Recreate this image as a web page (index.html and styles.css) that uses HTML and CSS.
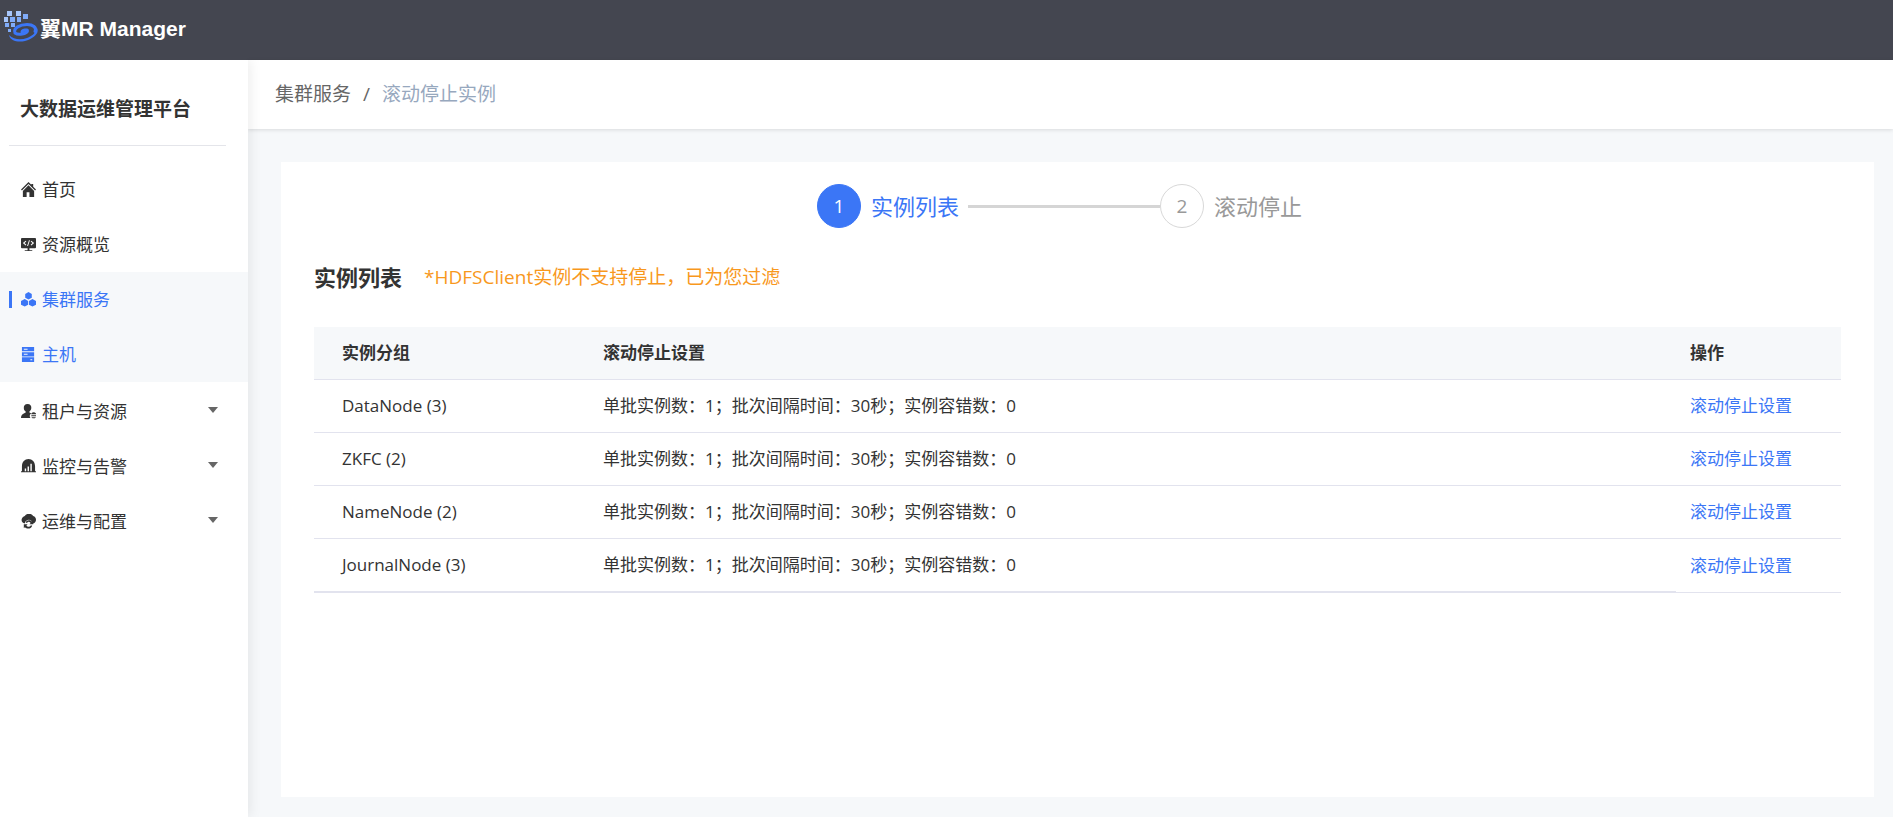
FILE: index.html
```html
<!DOCTYPE html>
<html lang="zh-CN">
<head>
<meta charset="utf-8">
<title>翼MR Manager</title>
<link rel="stylesheet" href="styles.css">
</head>
<body>
<header class="topbar">
  <svg class="logo" viewBox="0 0 36 32" width="36" height="32" aria-hidden="true">
    <g fill="#a6c5fb"><rect x="3" y="1" width="5" height="5"/><rect x="12" y="1" width="5" height="5"/><rect x="0" y="7" width="4" height="5"/></g>
    <g fill="#80abf8"><rect x="6" y="7" width="5" height="5"/><rect x="13" y="7" width="4" height="5"/><rect x="19" y="4" width="5" height="5"/><rect x="1" y="13" width="4" height="4"/><rect x="7" y="13" width="4" height="4"/><rect x="4" y="19" width="3" height="3"/></g>
    <path fill="none" stroke="#3b76f6" stroke-width="3" stroke-linecap="round" d="M18 22c0-2 6-3 5.500-1-1 3-9 4.500-12.500 2-2-5 5-8.500 12-8.500 6 0 10 3 8 7"/>
    <path fill="#3b76f6" d="M5 25c5 5 12 5 18 3 5-2 9-5 10-10 3 5-4 11-12 13-7 1.500-15 0-16-6z"/>
  </svg>
  <span class="brand">翼MR Manager</span>
</header>
<div class="layout">
  <aside class="sidebar">
    <h1 class="platform">大数据运维管理平台</h1>
    <nav class="menu">
      <a class="item" href="#"><svg class="icon" viewBox="0 0 16 16"><path d="M8 0 0 8l1 1 7-7 7 7 1-1-3-3V2h-2v1z"/><path d="M8 3.500 2 9.500V16h4v-5h3v5h5V9.500z"/></svg>首页</a>
      <a class="item" href="#"><svg class="icon" viewBox="0 0 16 16"><path fill-rule="evenodd" d="M1 1h14q1 0 1 1v9q0 1-1 1H9v2h3v1H4v-1h3v-2H1q-1 0-1-1V2q0-1 1-1zm4 3L2 6.500 5 9l.7-.8-2-1.700 2-1.700zm6 0-.7.800 2 1.700-2 1.700.7.800 3-2.500zM8.500 3.500l-2 6h1l2-6z"/></svg>资源概览</a>
      <a class="item active current" href="#"><svg class="icon" viewBox="0 0 16 16"><path d="m8 0 3.500 2v4L8 8 4.500 6V2zM4 7.500l3.600 2v4L4 15.500l-4-2v-4zM12.200 7.500l3.800 2v4l-3.800 2-3.700-2v-4z"/></svg>集群服务</a>
      <a class="item active" href="#"><svg class="icon" viewBox="0 0 16 16"><path fill-rule="evenodd" d="M1 0h13v4.500H1zm2 1.800v1h4v-1zM1 5.500h13V10H1zm2 1.800v1h4v-1zM1 11h13v5H1zm9 2v1h2v-1z"/></svg>主机</a>
      <div class="groups">
        <button class="item group" type="button"><svg class="icon" viewBox="0 0 16 16"><path d="M7 0c3 0 4 2 4 4 0 2-1 3-2 4v1l2 1c-2 1-2 3-1 5H0c0-3 1-4 3-5l2-1V8C3.500 7 3 6 3 4c0-2 1-4 4-4z"/><path d="M11 10q2.500-2.500 5 0v.8h-5zM11 12h5v1h-5zM11 14h5q-2.500 2.500-5 0z"/></svg><span>租户与资源</span><span class="caret"></span></button>
        <button class="item group" type="button"><svg class="icon" viewBox="0 0 16 16"><path fill-rule="evenodd" d="M0 13h1V8c0-5 3-8 7-8s7 3 7 8v5h1v1H0zm4-3v3h1.500v-3zm3-2v5h1.500V8zm3-3v8h1.500V5z"/></svg><span>监控与告警</span><span class="caret"></span></button>
        <button class="item group" type="button"><svg class="icon" viewBox="0 0 16 16"><path d="M4 2c2-3 7-3 9 0 4 1 4 7 0 8h-1C12 5 5 5 4 10 0 10-1 4 4 2z"/><path d="M5 9c1-3 5-3 6.500-1L13 7v4H9l1.300-1.500C9 8 7 8 6.500 9.500zM3 11h4l-1.300 1.500c1.300 1.500 4 1.500 4.800-.5l1.500.5c-1.300 3.500-5.500 4-7.700 1.500L3 15z"/></svg><span>运维与配置</span><span class="caret"></span></button>
      </div>
    </nav>
  </aside>
  <div class="content">
    <nav class="breadcrumb"><a class="crumb" href="#">集群服务</a><span class="slash">/</span><span class="here">滚动停止实例</span></nav>
    <main class="card">
      <ol class="steps">
        <li class="step on"><span class="num">1</span><span>实例列表</span></li>
        <li class="bar"></li>
        <li class="step"><span class="num">2</span><span>滚动停止</span></li>
      </ol>
      <div class="heading">
        <h2 class="title">实例列表</h2>
        <p class="note">*HDFSClient实例不支持停止，已为您过滤</p>
      </div>
      <table class="table">
        <thead><tr><th class="c-group">实例分组</th><th>滚动停止设置</th><th class="c-action">操作</th></tr></thead>
        <tbody>
          <tr><td>DataNode (3)</td><td>单批实例数：1；批次间隔时间：30秒；实例容错数：0</td><td><a class="link" href="#">滚动停止设置</a></td></tr>
          <tr><td>ZKFC (2)</td><td>单批实例数：1；批次间隔时间：30秒；实例容错数：0</td><td><a class="link" href="#">滚动停止设置</a></td></tr>
          <tr><td>NameNode (2)</td><td>单批实例数：1；批次间隔时间：30秒；实例容错数：0</td><td><a class="link" href="#">滚动停止设置</a></td></tr>
          <tr><td>JournalNode (3)</td><td>单批实例数：1；批次间隔时间：30秒；实例容错数：0</td><td><a class="link" href="#">滚动停止设置</a></td></tr>
        </tbody>
      </table>
    </main>
  </div>
</div>
</body>
</html>
```
FILE: styles.css
```css
* { box-sizing: border-box; }

body {
  margin: 0;
  min-height: 100vh;
  display: flex;
  flex-direction: column;
  font: 17px/24px "Open Sans", "Noto Sans CJK SC", sans-serif;
  color: #333;
  background: #f6f8fa;
}

a { color: inherit; text-decoration: none; }

.topbar {
  display: flex;
  align-items: flex-start;
  height: 60px;
  padding: 10px 4px;
  background: #444650;
  color: #fff;
}
.logo { flex: none; }
.brand {
  padding-top: 5px;
  font: bold 21px/28px "Liberation Sans", "Noto Sans CJK SC", sans-serif;
}

.layout { flex: 1; display: flex; }

.sidebar {
  position: relative;
  flex: none;
  width: 248px;
  background: #fff;
  box-shadow: 2px 0 12px rgba(0, 0, 0, 0.08);
  clip-path: inset(0 -20px 0 0);
}
.platform {
  margin: 0 22px 16px 9px;
  padding: 35px 11px 22px;
  border-bottom: 1px solid #e4e5ea;
  font-size: 19px;
  line-height: 28px;
  font-weight: 600;
}

.item {
  display: flex;
  align-items: center;
  width: 100%;
  height: 55px;
  padding: 0 30px 0 21px;
  border: 0;
  background: none;
  font: inherit;
  color: #333;
  text-align: left;
}
.icon {
  width: 15px;
  height: 15px;
  margin-right: 6px;
  fill: currentColor;
}
.active { background: #f6f8fa; color: #3b76f6; }
.current::before {
  content: "";
  width: 3px;
  height: 17px;
  margin: 0 9px 0 -12px;
  background: #3b76f6;
}
.groups { padding-top: 2px; }
.caret {
  margin: 0 0 4px auto;
  border: 5px solid transparent;
  border-top: 6px solid #666;
  border-bottom: 0;
}

.content { flex: 1; display: flex; flex-direction: column; min-width: 0; }

.breadcrumb {
  display: flex;
  align-items: center;
  height: 69px;
  padding: 0 27px 2px;
  background: #fff;
  box-shadow: 0 1px 4px rgba(0, 0, 0, 0.12);
  font-size: 19px;
}
.crumb { color: #666; }
.slash { margin: 0 12px; color: #666; }
.here { color: #97a8be; }

.card {
  flex: 1;
  margin: 33px 19px 20px 33px;
  padding: 22px 33px;
  background: #fff;
}

.steps {
  display: flex;
  justify-content: center;
  align-items: center;
  margin: 0;
  padding: 0 36px 0 0;
  list-style: none;
}
.step {
  display: flex;
  align-items: center;
  gap: 10px;
  font-size: 22px;
  color: #999;
}
.num {
  width: 44px;
  height: 44px;
  border: 1px solid #d8d8d8;
  border-radius: 50%;
  font-size: 19px;
  line-height: 42px;
  text-align: center;
}
.on { color: #3b76f6; }
.on .num { border-color: #3b76f6; background: #3b76f6; color: #fff; }
.bar { width: 192px; height: 3px; margin-left: 9px; background: #d5d5d5; }

.heading { display: flex; align-items: center; gap: 22px; margin: 33px 0 34px; }
.title { margin: 0; font-size: 22px; line-height: 32px; }
.note { margin: 0; font-size: 19px; color: #f8981d; }

.table {
  width: 100%;
  table-layout: fixed;
  border-collapse: separate;
  border-spacing: 0;
}
.table th,
.table td {
  padding: 14px;
  border-bottom: 1px solid #e2e3ee;
  text-align: left;
}
.table th { background: #f6f8fa; }
.table th:first-child,
.table td:first-child { padding-left: 28px; }
.table tr:last-child td:not(:last-child) { border-bottom-width: 2px; }
.c-group { width: 275px; }
.c-action { width: 165px; }
.link { color: #3b76f6; }
```
